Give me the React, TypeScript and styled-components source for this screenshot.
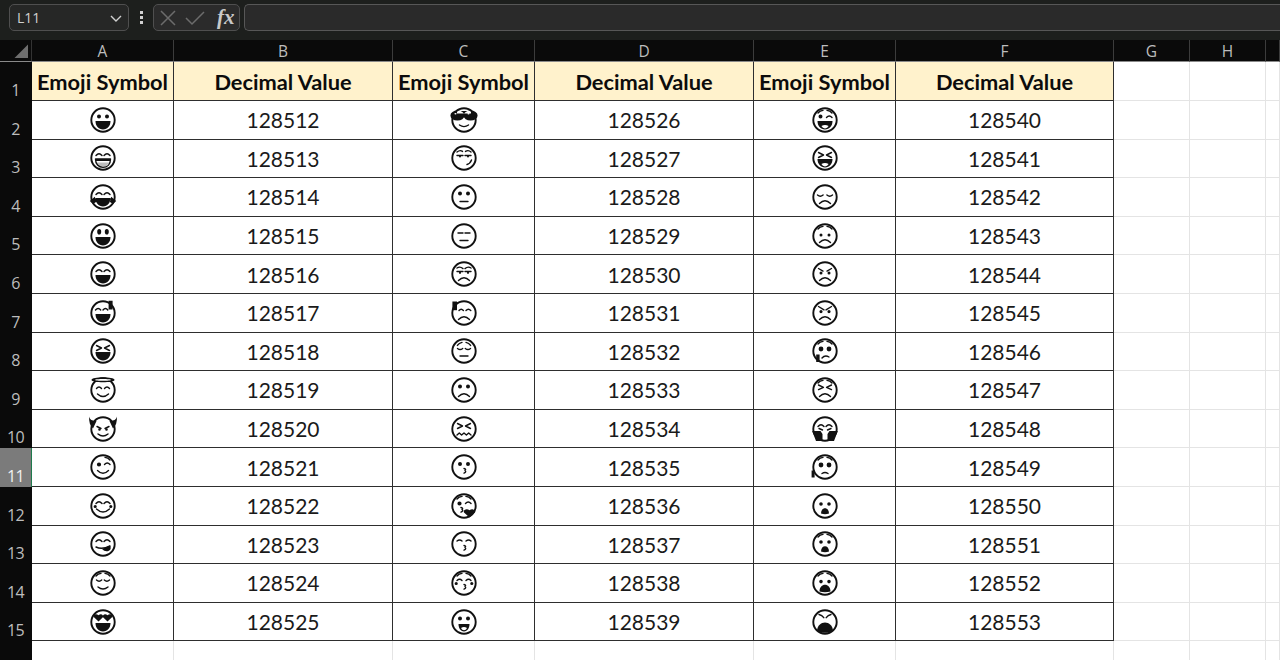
import React from "react";
import styled, { createGlobalStyle } from "styled-components";

const GlobalStyle = createGlobalStyle`
  html, body { margin: 0; padding: 0; width: 1280px; height: 660px; overflow: hidden; background: #fff; }
  body { font-family: "Lato", "Liberation Sans", sans-serif; }
`;

const Page = styled.div`
  width: 1280px;
  height: 660px;
  overflow: hidden;
  display: flex;
  flex-direction: column;
`;

const Toolbar = styled.div`
  height: 40px;
  flex: none;
  box-sizing: border-box;
  padding: 4px 0 9px 9px;
  background: #1d1f1d;
  display: flex;
  align-items: stretch;
`;

const NameBox = styled.div`
  width: 120px;
  box-sizing: border-box;
  border: 1px solid #4f4f4f;
  border-radius: 5px;
  background: #262726;
  color: #d0d0d0;
  font-family: "Open Sans", sans-serif;
  font-size: 14px;
  display: flex;
  align-items: center;
  justify-content: space-between;
  padding: 0 5px 0 7px;
`;

const Grip = styled.div`
  width: 24px;
  display: flex;
  flex-direction: column;
  align-items: center;
  justify-content: center;
  gap: 2px;
`;

const GripDot = styled.span`
  width: 3px;
  height: 3px;
  background: #d0d0d0;
`;

const FormulaTools = styled.div`
  width: 87px;
  box-sizing: border-box;
  border: 1px solid #4f4f4f;
  border-radius: 5px;
  background: #2b2b2b;
  display: flex;
  align-items: center;
  padding: 0 4px 0 6px;
  gap: 9px;
`;

const FxLabel = styled.span`
  font-family: "Liberation Serif", serif;
  font-style: italic;
  font-weight: 700;
  font-size: 21px;
  color: #c8c8c8;
  margin-left: 3px;
  line-height: 1;
`;

const FormulaInput = styled.div`
  flex: 1;
  margin-left: 4px;
  box-sizing: border-box;
  border: 1px solid #575757;
  border-right: none;
  border-radius: 5px 0 0 5px;
  background: #2a2a2a;
`;

const Sheet = styled.div`
  flex: 1;
  display: grid;
  grid-template-columns: 32px 142px 219px 142px 219px 142px 218px 76px 76px 1fr;
  grid-template-rows: 22.4px repeat(16, 38.6px);
  overflow: hidden;
`;

const Corner = styled.div`
  background: #0a0a0a;
  border-right: 1px solid #333;
  border-bottom: 1px solid #8a8a8a;
  box-sizing: border-box;
  display: flex;
  align-items: flex-end;
  justify-content: flex-end;
  padding: 0 3px 3px 0;
`;

const CornerMark = styled.span`
  width: 14px;
  height: 14px;
  background: #6e6e6e;
  clip-path: polygon(100% 0, 100% 100%, 0 100%);
`;

const ColHead = styled.div`
  background: #0a0a0a;
  color: #bdbdbd;
  font-family: "Open Sans", sans-serif;
  font-size: 15.5px;
  display: flex;
  align-items: center;
  justify-content: center;
  box-sizing: border-box;
  border-right: 1px solid #3c3c3c;
  border-bottom: 1px solid #8a8a8a;
`;

const RowHead = styled.div<{ $active?: boolean }>`
  background: ${(p) => (p.$active ? "#7b7b7b" : "#0a0a0a")};
  color: ${(p) => (p.$active ? "#f0f0f0" : "#bdbdbd")};
  border-right: ${(p) => (p.$active ? "1px solid #1f7a4d" : "1px solid #0a0a0a")};
  font-family: "Open Sans", sans-serif;
  font-size: 16px;
  letter-spacing: -0.6px;
  line-height: 1;
  display: flex;
  align-items: flex-end;
  justify-content: center;
  padding-bottom: 3px;
  box-sizing: border-box;
`;

const Cell = styled.div<{ $head?: boolean }>`
  box-sizing: border-box;
  border-right: 1px solid #2e2e2e;
  border-bottom: 1px solid #2e2e2e;
  background: ${(p) => (p.$head ? "#fff2cc" : "#fff")};
  color: ${(p) => (p.$head ? "#0c0c0c" : "#1a1a1a")};
  font-family: "Lato", "Liberation Sans", sans-serif;
  font-weight: ${(p) => (p.$head ? 700 : 400)};
  font-size: ${(p) => (p.$head ? "21.8px" : "21px")};
  padding-top: ${(p) => (p.$head ? "1px" : "0")};
  display: flex;
  align-items: center;
  justify-content: center;
  white-space: nowrap;
`;

const EmptyCell = styled.div`
  box-sizing: border-box;
  border-right: 1px solid #e4e4e4;
  border-bottom: 1px solid #e4e4e4;
  background: #fff;
`;

const FaceSvg = styled.svg`
  width: 28px;
  height: 28px;
  display: block;
  overflow: visible;
`;

const dot = (x: number, y: number, r: number, ry = r) =>
  `M${x - r} ${y}a${r} ${ry} 0 1 0 ${2 * r} 0a${r} ${ry} 0 1 0 ${-2 * r} 0z`;

type Spec = { s?: string; f?: string; t?: string; g?: string };

const dots = dot(10, 10.5, 2) + dot(18, 10.5, 2);
const talls = dot(10.2, 9.8, 2, 2.8) + dot(17.8, 9.8, 2, 2.8);
const big = dot(10, 12, 2.4) + dot(18, 12, 2.4);
const arcs = "M7 11.5q3-3.6 6 0M15 11.5q3-3.6 6 0";
const closed = "M7.5 11q2.6 2.4 5.2 0M15.3 11q2.6 2.4 5.2 0";
const xEyes = "M7.5 8.5l5 2.5-5 2.5M20.5 8.5l-5 2.5 5 2.5";
const wink = "M15.5 11.5q2.7-3 5.5 0";
const browL = "M7 7q2-2.4 5-2.6";
const browR = "M21 7q-2-2.4-5-2.6";
const open = "M6.5 15H21.5C21.5 20 18.5 23.4 14 23.4S6.5 20 6.5 15z";
const smile = "M8.5 17.5q5.5 5.5 11 0";
const frown = "M8.5 20.5q5.5-5.6 11 0";
const flat = "M10 18.5H18";
const kiss = "M14 15.5q2.6.6 1 2q1.8 1.2-1 2.6";
const small = "M10 21.5c0-7 8-7 8 0q-4 1.4-8 0z";
const mid = "M8.5 22.5c0-9 11-9 11 0q-5.5 1.6-11 0z";
const large = "M6 23C6.5 11.5 21.5 11.5 22 23 17.5 25.4 10.5 25.4 6 23z";
const blush = dot(6.2, 14.5, 1.6) + dot(21.8, 14.5, 1.6);
const tongue = "M10.4 20q3.6-2 7.2 0-1.2 2.4-3.6 2.4T10.4 20z";
const heartEyes =
  "M9.5 13.6L5 9.3C3.6 6.8 7.2 5 9.5 7.3 11.8 5 15 6.8 13.9 9.3zM18.5 13.6L14 9.3C13 6.8 16.2 5 18.5 7.3 20.8 5 24.4 6.8 23 9.3z";

const faces: Spec[] = [
  { f: dots + open },
  { s: arcs + open + "M7 16.2h14", g: "M8 18.5H20C19 21 17 22.6 14 22.6S9 21 8 18.5z" },
  { s: arcs, f: open + "M0.8 18l5-4.2 1.6 5-3.4 2.2zM27.2 18l-5-4.2-1.6 5 3.4 2.2z" },
  { f: talls + open },
  { s: arcs, f: open },
  { s: "M6.5 11q2.7-3 5.2 0M14 11q2.5-3 4.8 0", f: open + "M19.6 1.8h4v8.7h-4z" },
  { s: xEyes, f: open },
  {
    s: "M7.5 12.5q2.5-3 5 0M15.5 12.5q2.5-3 5 0M8.5 18q5.5 5 11 0",
    f: "M2.5 4c0-3.6 23-3.6 23 0 0 3-23 3-23 0z",
    t: "M6 4c0-1.2 16-1.2 16 0 0 1-16 1-16 0z",
  },
  {
    s: "M8 11.5l4 2M20 11.5l-4 2M9 19q5 4 10 0",
    f:
      "M0 1.5C.8 4.5 3 6 7.5 6L4 13.5C1 11 0 7 0 1.5zM28 1.5C27.2 4.5 25 6 20.5 6L24 13.5C27 11 28 7 28 1.5z" +
      dot(10.5, 14.5, 1.3) +
      dot(17.5, 14.5, 1.3),
  },
  { s: wink + smile + browR, f: dot(10, 11.5, 2.1) },
  { s: arcs + "M7.5 17q6.5 6 13 0", f: blush },
  { s: arcs + "M7 17q6 3 14-1", f: "M13 19l8-3.5q2 4-1.6 5.5-3.6 1-6.4-2z" },
  { s: closed + "M9 18q5 4 10 0" + browL + browR },
  { f: open + heartEyes },
  {
    s: "M9.5 19q4.5 3.2 9 0",
    f: dot(7.4, 9.6, 7, 5) + dot(20.6, 9.6, 7, 5) + "M7 5h14v2.4H7z",
    t: dot(5.5, 7.8, 1.1, 0.7) + dot(18.5, 7.8, 1.1, 0.7),
  },
  {
    s: "M7 8q3-2.4 5.5-.6M15.5 7.4q3-1.8 5.5.6M7 11.5h6M15 11.5h6M17 20.5q3-.6 4.5-4.5",
    f: dot(10, 12.6, 1) + dot(18, 12.6, 1),
  },
  { f: dots, s: flat },
  { s: "M8 11h5M15 11h5" + flat },
  {
    s: "M7 8q3-2 6 .6M21 8q-3-2-6 .6M7 11.5h6M15 11.5h6" + frown,
    f: dot(10, 12.8, 1.1) + dot(18, 12.8, 1.1),
  },
  { s: "M9 11.5q2.2-2.6 4.4 0M16 11.5q2.4-2.6 4.8 0" + frown, f: "M2.4 2.5h4.6v8.7h-4.6z" },
  { s: "M7.5 11.5q2.6 2.2 5.2 0M15.3 11.5q2.6 2.2 5.2 0M12 5.4q-3 .6-4.6 3M16 5.4q3 .6 4.6 3M10 19h8" },
  { f: dots, s: frown },
  { s: xEyes + "M7 20l2.3-2 2.3 2 2.4-2 2.4 2 2.3-2 2.3 2" },
  { f: dot(10, 11, 2) + dot(18, 11, 2), s: kiss },
  {
    s: wink + browL + browR + "M11 15.5q2.6.6 1 2q1.8 1.2-1 2.6",
    f: dot(9.5, 11.5, 2.1) + "M19.5 25.5l-5.5-5c-1.4-2.8 3-4.6 5.5-2.2 2.5-2.4 6.4-.6 5.2 2.2z",
  },
  { s: "M7 11q2.6-2.2 5 0M16 11q2.6-2.2 5 0" + kiss },
  { s: "M7 11.5q2.6-2.4 5 0M16 11.5q2.6-2.4 5 0" + browL + browR + kiss, f: blush },
  { f: dots + "M8.5 16H19.5C19.5 20 17.5 23.4 14 23.4S8.5 20 8.5 16z", t: "M11 20q3-1.8 6 0-1 2.2-3 2.2T11 20z" },
  { s: wink + browL + browR, f: dot(9.5, 10.5, 2) + open, t: tongue },
  { s: xEyes, f: open, t: tongue },
  { s: "M6.5 12q2.8 2.4 5.6 0M15.9 12q2.8 2.4 5.6 0" + frown },
  { s: browL + browR + frown, f: dot(10, 13, 1.5) + dot(18, 13, 1.5) },
  { s: "M7.5 8.5l4.5 2.6M20.5 8.5l-4.5 2.6" + frown, f: dot(10, 13, 1.5) + dot(18, 13, 1.5) },
  { s: "M7.5 7.5l5.5 3.3M20.5 7.5l-5.5 3.3" + frown, f: dot(10, 12.6, 1.6) + dot(18, 12.6, 1.6) },
  { s: browL + browR + "M11 21q3-3.4 7-1", f: big + "M5.2 17.5h3.4v7.5h-3.4z" },
  { s: "M7.5 9l5 2.3-5 2.3M20.5 9l-5 2.3 5 2.3" + frown + browL + browR },
  {
    s: arcs + "M8 13.5l3.5 1.5M20 13.5l-3.5 1.5",
    f: "M1.2 16H9.5l2 3v7H5zM26.8 16H18.5l-2 3v7H23z",
  },
  { s: browL + browR + "M11 20.5q3-2 6 0", f: big + "M0.6 17.5h3v7h-3z" },
  { f: dot(10, 12, 1.8) + dot(18, 12, 1.8) + small },
  { s: browL + browR, f: dot(10, 12, 1.8) + dot(18, 12, 1.8) + small },
  { s: browL + browR, f: dot(10, 12.6, 1.8) + dot(18, 12.6, 1.8) + mid },
  { s: "M8 6.5q3 .8 4.8 3.2M20 6.5q-3 .8-4.8 3.2", f: large },
];

function Face({ spec }: { spec: Spec }) {
  return (
    <FaceSvg viewBox="0 0 28 28" role="img">
      <circle cx="14" cy="14" r="11.7" fill="none" stroke="#111" strokeWidth="1.9" />
      {spec.g && <path d={spec.g} fill="#bdbdbd" />}
      {spec.f && <path d={spec.f} fill="#111" />}
      {spec.t && <path d={spec.t} fill="#fff" />}
      {spec.s && (
        <path d={spec.s} fill="none" stroke="#111" strokeWidth="1.4" strokeLinecap="round" strokeLinejoin="round" />
      )}
    </FaceSvg>
  );
}

const columns = ["A", "B", "C", "D", "E", "F", "G", "H", ""];
const ACTIVE_ROW = 11;

export default function App() {
  const rows = Array.from({ length: 14 }, (_, i) => i);
  return (
    <Page>
      <GlobalStyle />
      <Toolbar>
        <NameBox>
          L11
          <svg width="14" height="14" viewBox="0 0 14 14" fill="none" stroke="#d0d0d0" strokeWidth="1.4">
            <path d="M2 5l5 5 5-5" />
          </svg>
        </NameBox>
        <Grip>
          <GripDot />
          <GripDot />
          <GripDot />
        </Grip>
        <FormulaTools>
          <svg width="16" height="16" viewBox="0 0 16 16" fill="none" stroke="#6c6c6c" strokeWidth="1.5">
            <path d="M1 1l14 14M15 1L1 15" />
          </svg>
          <svg width="20" height="16" viewBox="0 0 20 16" fill="none" stroke="#6c6c6c" strokeWidth="1.5">
            <path d="M1 8l6 6L19 2" />
          </svg>
          <FxLabel>fx</FxLabel>
        </FormulaTools>
        <FormulaInput />
      </Toolbar>
      <Sheet>
        <Corner>
          <CornerMark />
        </Corner>
        {columns.map((c, i) => (
          <ColHead key={i}>{c}</ColHead>
        ))}

        <RowHead>1</RowHead>
        {[0, 1, 2].map((i) => (
          <React.Fragment key={i}>
            <Cell $head>Emoji Symbol</Cell>
            <Cell $head>Decimal Value</Cell>
          </React.Fragment>
        ))}
        <EmptyCell />
        <EmptyCell />
        <EmptyCell />

        {rows.map((r) => (
          <React.Fragment key={r}>
            <RowHead $active={r + 2 === ACTIVE_ROW}>{r + 2}</RowHead>
            {[0, 14, 28].map((offset) => (
              <React.Fragment key={offset}>
                <Cell>
                  <Face spec={faces[r + offset]} />
                </Cell>
                <Cell>{128512 + r + offset}</Cell>
              </React.Fragment>
            ))}
            <EmptyCell />
            <EmptyCell />
            <EmptyCell />
          </React.Fragment>
        ))}

        <RowHead />
        {columns.map((_, i) => (
          <EmptyCell key={i} />
        ))}
      </Sheet>
    </Page>
  );
}
